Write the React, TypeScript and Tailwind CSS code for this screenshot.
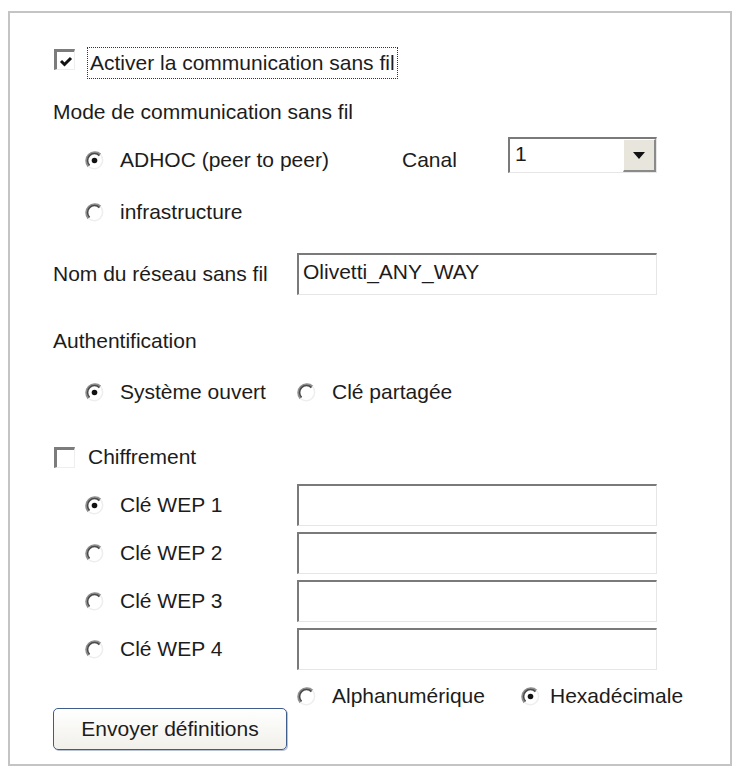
import React from "react";

function Radio({ checked = false }: { checked?: boolean }) {
  return (
    <svg width="19" height="19" viewBox="0 0 19 19" className="shrink-0">
      <circle cx="9.5" cy="9.5" r="8.5" fill="#ffffff" />
      <path d="M3.5 15.5 A8.5 8.5 0 0 1 15.5 3.5" fill="none" stroke="#8e8e8e" strokeWidth="2.2" />
      <path d="M4.6 14.4 A6.9 6.9 0 0 1 14.4 4.6" fill="none" stroke="#4a4a4a" strokeWidth="1.6" />
      <path d="M15.5 3.5 A8.5 8.5 0 0 1 3.5 15.5" fill="none" stroke="#eeeeee" strokeWidth="1.5" />
      {checked && <circle cx="9.5" cy="9.5" r="2.8" fill="#111111" />}
    </svg>
  );
}

function Checkbox({ checked = false }: { checked?: boolean }) {
  return (
    <div className="flex h-[21px] w-[21px] shrink-0 items-center justify-center border-l-[3px] border-t-[3px] border-b border-r border-l-[#7c7c7c] border-t-[#7c7c7c] border-b-[#eeeeee] border-r-[#eeeeee] bg-white">
      {checked && (
        <svg width="16" height="16" viewBox="0 0 16 16">
          <path d="M3 8 L6.5 11.5 L13 5" fill="none" stroke="#111111" strokeWidth="3" />
        </svg>
      )}
    </div>
  );
}

function Field({ value = "" }: { value?: string }) {
  return (
    <div className="flex h-[42px] w-[360px] items-start border-l-2 border-t-2 border-b border-r border-l-[#7a7a7a] border-t-[#7a7a7a] border-b-[#e6e6e6] border-r-[#e6e6e6] bg-white pl-[4px] pt-[5px]">
      {value}
    </div>
  );
}

function RadioLabel({ checked, label, gap = "gap-[16px]" }: { checked?: boolean; label: string; gap?: string }) {
  return (
    <div className={`flex h-[24px] items-center ${gap}`}>
      <Radio checked={checked} />
      <span>{label}</span>
    </div>
  );
}

export default function App() {
  const keys = ["Clé WEP 1", "Clé WEP 2", "Clé WEP 3", "Clé WEP 4"];
  return (
    <div className="min-h-[776px] w-[737px] bg-white pl-[8px] pt-[11px] text-[21px] leading-[24px] text-[#1c1c1c] [font-family:'Liberation_Sans',Arial,sans-serif]">
      <div className="flex h-[755px] w-[724px] flex-col border-2 border-[#c4c4c4] pl-[43px] pt-[34px]">
        {/* activer */}
        <div className="flex h-[32px] items-start">
          <div className="ml-[1px] mt-[2px]">
            <Checkbox checked />
          </div>
          <div className="ml-[12px] flex h-[32px] items-center border border-dotted border-[#333333] px-[2px]">
            Activer la communication sans fil
          </div>
        </div>

        <div className="mt-[21px] h-[24px]">Mode de communication sans fil</div>

        <div className="mt-[13px] flex h-[36px] items-start">
          <div className="mt-[11px] w-[349px] pl-[32px]">
            <RadioLabel checked label="ADHOC (peer to peer)" />
          </div>
          <div className="mt-[11px] h-[24px] w-[106px]">Canal</div>
          <div className="flex h-[36px] w-[149px] border-l-2 border-t-2 border-b border-r border-l-[#7a7a7a] border-t-[#7a7a7a] border-b-[#e6e6e6] border-r-[#e6e6e6] bg-white">
            <div className="flex flex-1 items-start pl-[5px] pt-[3px]">1</div>
            <div className="flex w-[33px] items-center justify-center border-b-2 border-r-2 border-b-[#8a8a8a] border-r-[#8a8a8a] border-t border-l border-t-white border-l-white bg-[#e8e6dc]">
              <svg width="12" height="7" viewBox="0 0 12 7">
                <path d="M0 0 H12 L6 7 Z" fill="#111111" />
              </svg>
            </div>
          </div>
        </div>

        <div className="mt-[27px] pl-[32px]">
          <RadioLabel label="infrastructure" />
        </div>

        <div className="mt-[29px] flex h-[42px] items-center">
          <div className="w-[244px]">Nom du réseau sans fil</div>
          <Field value="Olivetti_ANY_WAY" />
        </div>

        <div className="mt-[34px] h-[24px]">Authentification</div>

        <div className="mt-[27px] flex h-[24px] items-center">
          <div className="w-[244px] pl-[32px]">
            <RadioLabel checked label="Système ouvert" />
          </div>
          <RadioLabel label="Clé partagée" />
        </div>

        <div className="mt-[41px] flex h-[24px] items-center gap-[13px]">
          <div className="ml-[1px]">
            <Checkbox />
          </div>
          <span>Chiffrement</span>
        </div>

        <div className="mt-[15px] flex flex-col gap-[6px]">
          {keys.map((k, i) => (
            <div key={k} className="flex h-[42px] items-center">
              <div className="w-[244px] pl-[32px]">
                <RadioLabel checked={i === 0} label={k} />
              </div>
              <Field />
            </div>
          ))}
        </div>

        <div className="mt-[14px] flex h-[24px] items-center pl-[244px]">
          <div className="w-[224px]">
            <RadioLabel label="Alphanumérique" />
          </div>
          <RadioLabel checked label="Hexadécimale" gap="gap-[10px]" />
        </div>

        <button className="flex h-[42px] w-[234px] items-center justify-center rounded-[5px] border-[1.5px] border-[#3f5d8a] bg-gradient-to-b from-white to-[#f1f0ea] shadow-[1px_1px_0_#b9c3d3]">
          Envoyer définitions
        </button>
      </div>
    </div>
  );
}
